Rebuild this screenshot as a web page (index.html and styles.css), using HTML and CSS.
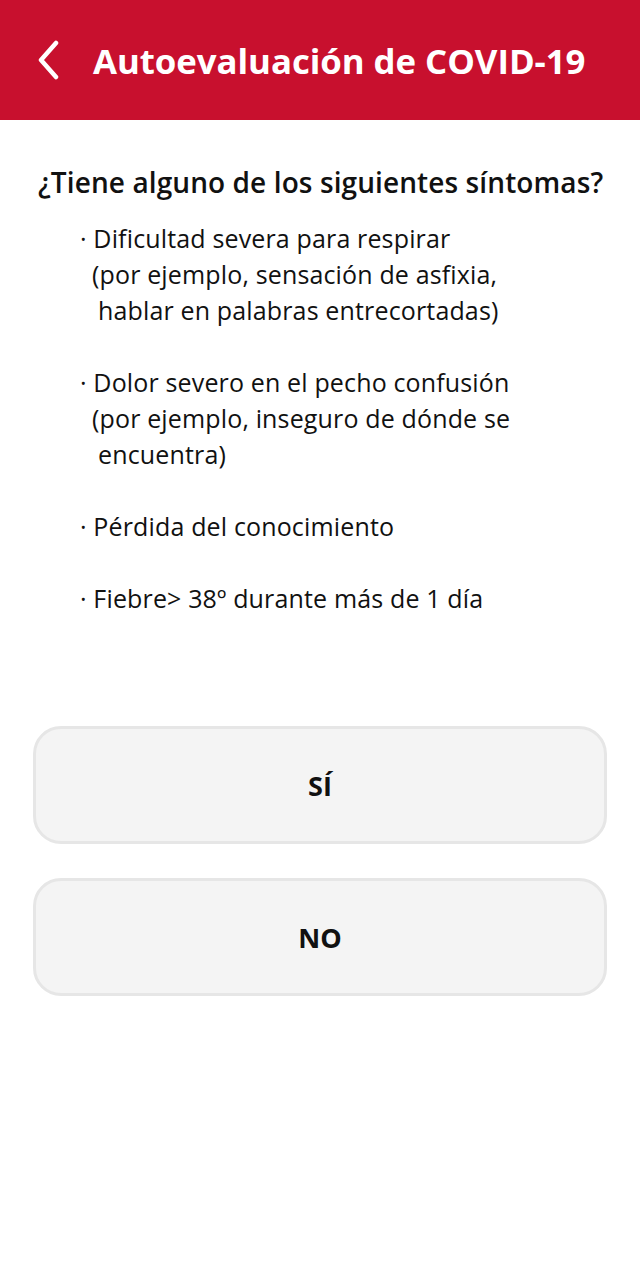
FILE: index.html
```html
<!DOCTYPE html>
<html lang="es">
<head>
<meta charset="utf-8">
<title>Autoevaluación de COVID-19</title>
<link rel="stylesheet" href="styles.css">
</head>
<body>
<header class="topbar">
  <svg class="back" width="24" height="40" viewBox="0 0 24 40"><path d="M20 3 L5 20 L20 37" fill="none" stroke="#fff" stroke-width="4.5" stroke-linecap="round" stroke-linejoin="round"/></svg>
  <h1 class="title">Autoevaluación de COVID-19</h1>
</header>
<main class="content">
  <h2 class="question">¿Tiene alguno de los siguientes síntomas?</h2>
  <div class="list">
    <div class="item">
      <div class="l1">· Dificultad severa para respirar</div>
      <div class="l2">(por ejemplo, sensación de asfixia,</div>
      <div class="l3">hablar en palabras entrecortadas)</div>
    </div>
    <div class="item">
      <div class="l1">· Dolor severo en el pecho confusión</div>
      <div class="l2">(por ejemplo, inseguro de dónde se</div>
      <div class="l3">encuentra)</div>
    </div>
    <div class="item">
      <div class="l1">· Pérdida del conocimiento</div>
    </div>
    <div class="item">
      <div class="l1">· Fiebre&gt; 38º durante más de 1 día</div>
    </div>
  </div>
  <div class="buttons">
    <button class="btn">SÍ</button>
    <button class="btn">NO</button>
  </div>
</main>
</body>
</html>
```
FILE: styles.css
```css
* { box-sizing: border-box; }
body {
  margin: 0;
  background: #fff;
  font-family: "Open Sans", "Noto Sans", sans-serif;
  color: #111;
}
.topbar {
  height: 120px;
  background: #C8102E;
  display: flex;
  align-items: center;
  padding-left: 36px;
}
.back { display: block; margin-right: 33px; }
.title {
  margin: 0;
  color: #fff;
  font-size: 34.8px;
  font-weight: 700;
  letter-spacing: -0.05px;
}
.content { padding: 0 33px; }
.question {
  margin: 42px 0 0 5px;
  font-size: 28px;
  font-weight: 600;
  line-height: 40px;
  letter-spacing: 0.1px;
}
.list {
  margin: 18px 0 0 47px;
  font-size: 25px;
  line-height: 36px;
  letter-spacing: 0.15px;
  display: flex;
  flex-direction: column;
  gap: 36px;
}
.l2 { padding-left: 12px; }
.l3 { padding-left: 18px; }
.buttons {
  margin-top: 110px;
  display: flex;
  flex-direction: column;
  gap: 34px;
}
.btn {
  height: 118px;
  width: 100%;
  background: #f4f4f4;
  border: 3px solid #e6e6e6;
  border-radius: 28px;
  font-family: inherit;
  font-size: 27px;
  font-weight: 700;
  color: #111;
}
```
